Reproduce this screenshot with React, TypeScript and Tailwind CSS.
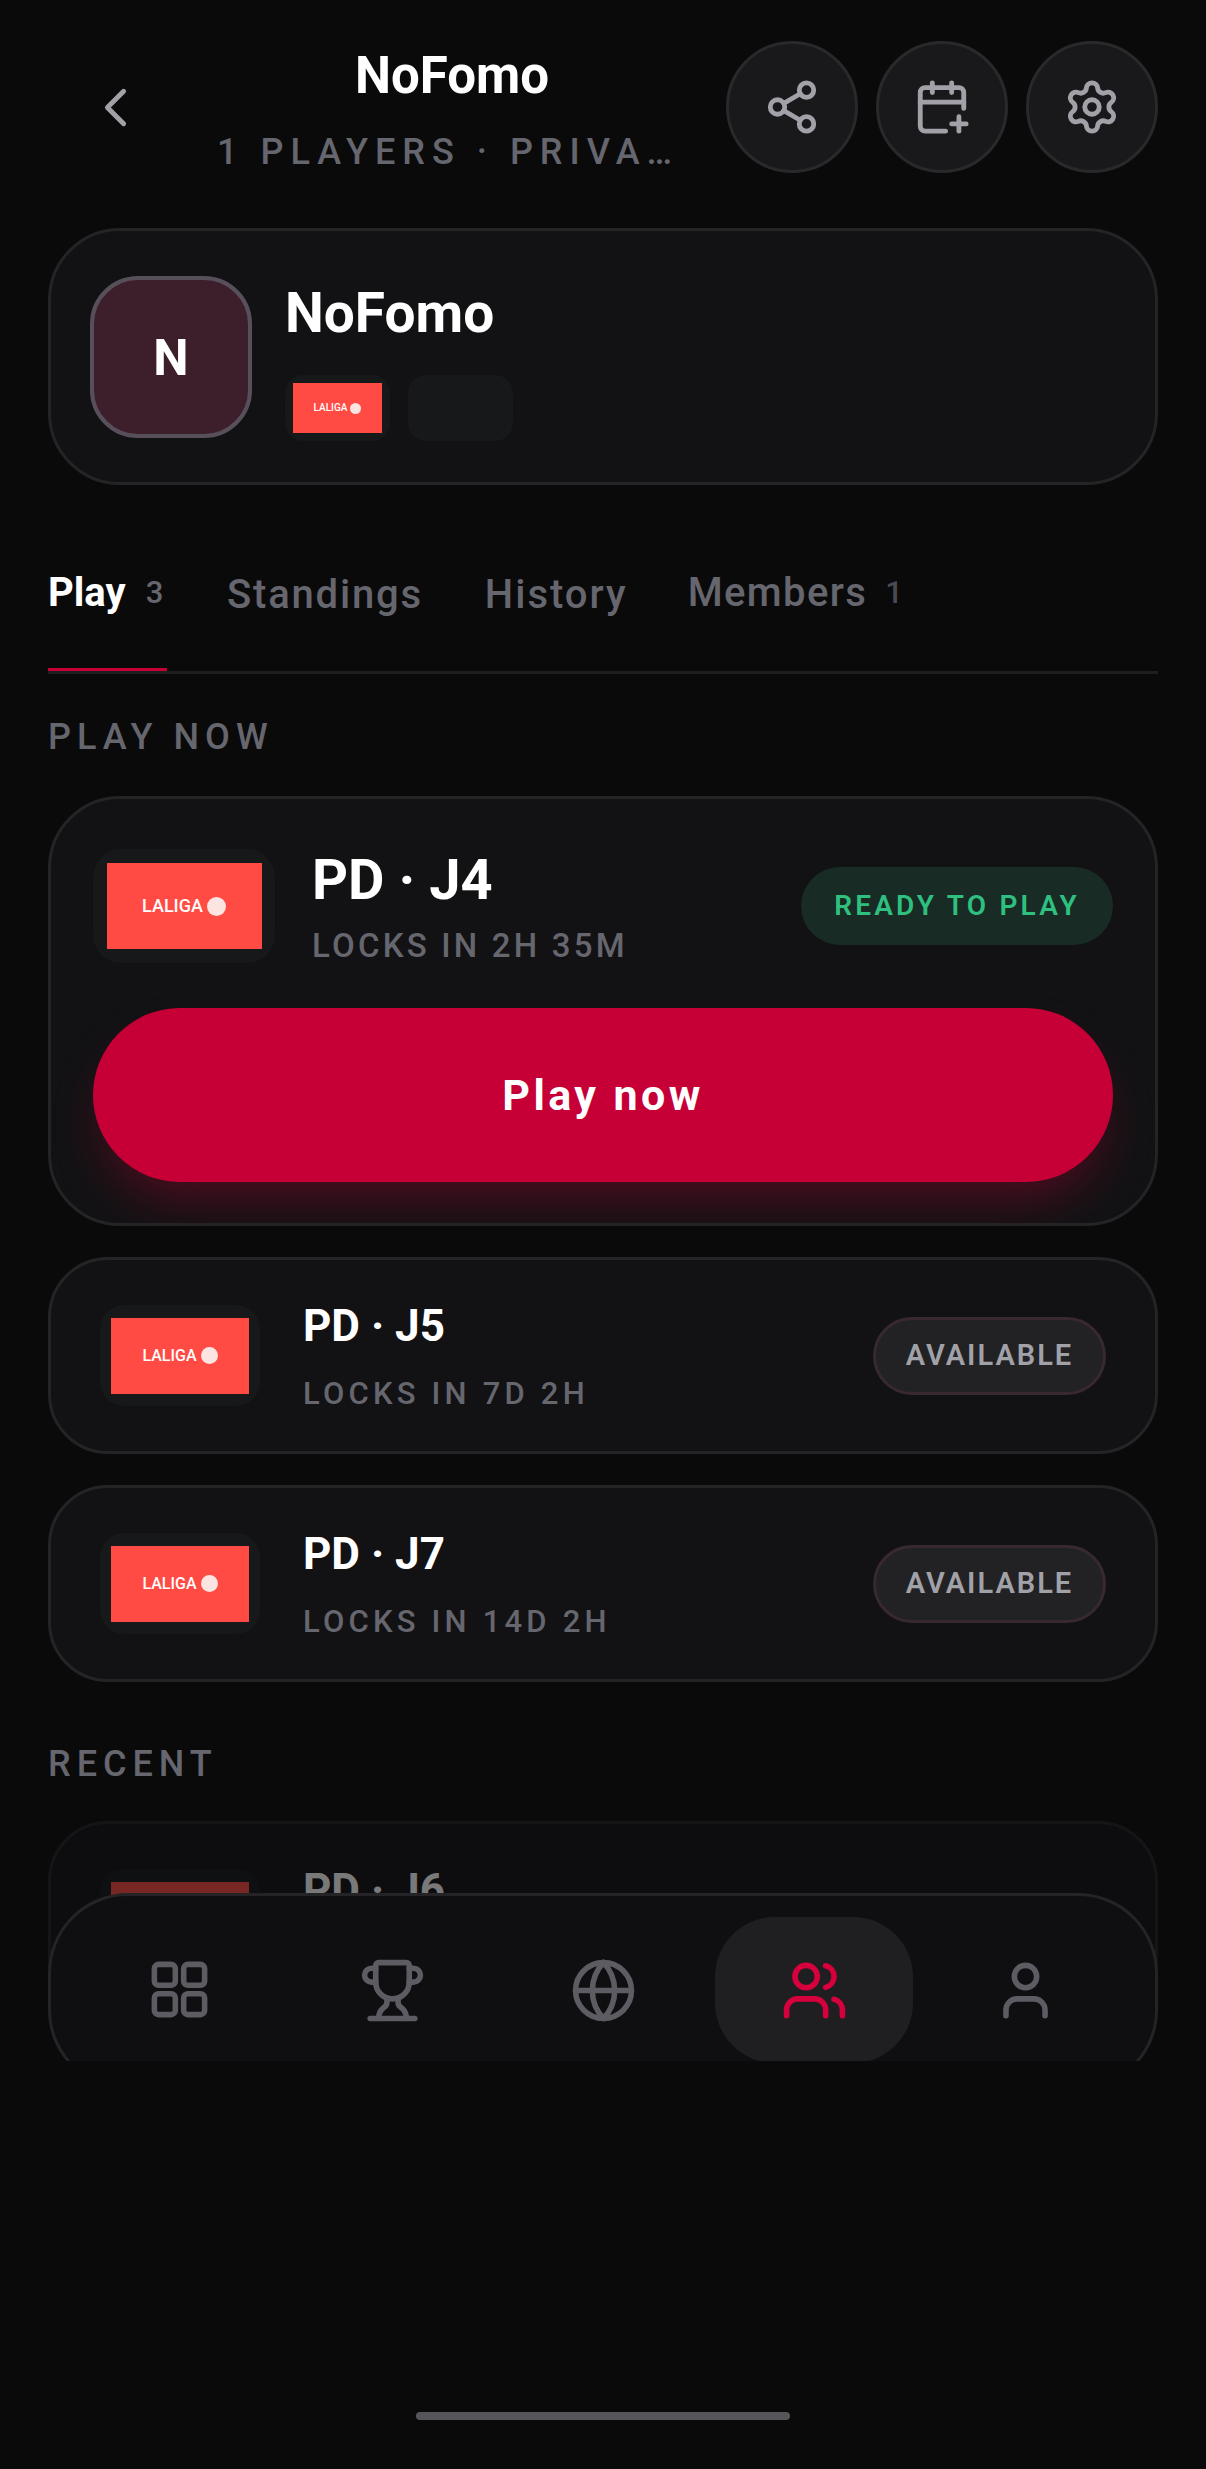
import { CalendarPlus, ChevronLeft, Globe, Settings, Share2, Trophy, User, Users } from "lucide-react";

function Laliga({ size }: { size: "lg" | "md" | "sm" }) {
  const box = size === "lg" ? "w-[155px] h-[86px] gap-[4px]" : size === "md" ? "w-[138px] h-[76px] gap-[4px]" : "w-[89px] h-[50px] gap-[3px]";
  const label = size === "lg" ? "text-[18px]" : size === "md" ? "text-[16px]" : "text-[10px]";
  const ball = size === "lg" ? "w-[19px] h-[19px]" : size === "md" ? "w-[17px] h-[17px]" : "w-[11px] h-[11px]";
  return (
    <div className={`flex items-center justify-center bg-[#ff4b44] ${box}`}>
      <span className={`font-medium leading-none text-white ${label}`}>LALIGA</span>
      <span className={`rounded-full bg-[#fbe4e2] ${ball}`}></span>
    </div>
  );
}

function SmallRow({ title, locks, available = true }: { title: string; locks: string; available?: boolean }) {
  return (
    <div className="flex h-[197px] items-center rounded-[60px] border-[3px] border-[#242427] bg-[#121214] pl-[49px] pr-[49px]">
      <div className="flex h-[101px] w-[160px] shrink-0 items-center justify-center rounded-[24px] bg-[#17181a]">
        <Laliga size="md" />
      </div>
      <div className="ml-[43px] flex-1">
        <div className="text-[44px] font-bold leading-[52px] text-white">{title}</div>
        <div className="mt-[24px] text-[31px] font-medium leading-[36px] tracking-[4.2px] text-[#66666e]">{locks}</div>
      </div>
      {available && (
        <div className="flex h-[78px] w-[233px] items-center justify-center rounded-full border-[3px] border-[#38292f] bg-[#222225] text-[29px] font-semibold tracking-[2px] text-[#a1a1a8]">
          AVAILABLE
        </div>
      )}
    </div>
  );
}

export default function App() {
  return (
    <div className="flex h-[2469px] w-[1206px] flex-col bg-[#0a0a0b] font-['Roboto',sans-serif]">
      <div className="relative h-[2061px] overflow-hidden">
        <div className="px-[48px] pt-[41px]">
          {/* top bar */}
          <div className="flex items-center">
            <div className="flex h-[132px] w-[130px] shrink-0 items-center justify-center">
              <ChevronLeft size={65} strokeWidth={1.8} className="ml-[4px] text-[#a1a1a8]" />
            </div>
            <div className="min-w-0 flex-1 pt-[6px] text-center">
              <div className="text-[51px] font-bold leading-[58px] text-white">NoFomo</div>
              <div className="ml-[39px] mt-[26px] whitespace-nowrap text-left text-[36px] font-medium leading-[42px] tracking-[7px] text-[#66666e]">
                1 PLAYERS · PRIVA…
              </div>
            </div>
            <div className="flex shrink-0 gap-[18px]">
              <button className="flex h-[132px] w-[132px] items-center justify-center rounded-full border-[3px] border-[#29292c] bg-[#19191c] text-[#a1a1a8]">
                <Share2 size={58} />
              </button>
              <button className="flex h-[132px] w-[132px] items-center justify-center rounded-full border-[3px] border-[#29292c] bg-[#19191c] text-[#a1a1a8]">
                <CalendarPlus size={58} />
              </button>
              <button className="flex h-[132px] w-[132px] items-center justify-center rounded-full border-[3px] border-[#29292c] bg-[#19191c] text-[#a1a1a8]">
                <Settings size={58} />
              </button>
            </div>
          </div>

          {/* league card */}
          <div className="mt-[55px] flex h-[257px] items-center rounded-[72px] border-[3px] border-[#242427] bg-[#121214] pl-[39px]">
            <div className="flex h-[162px] w-[162px] shrink-0 items-center justify-center rounded-[48px] border-[4px] border-[#57505a] bg-[#3d1f2b] pt-[4px] text-[50px] font-bold text-white">
              N
            </div>
            <div className="ml-[33px] pt-[10px]">
              <div className="text-[55px] font-bold leading-[62px] text-white">NoFomo</div>
              <div className="mt-[31px] flex gap-[18px]">
                <div className="flex h-[66px] w-[105px] items-center justify-center rounded-[18px] bg-[#17181a]">
                  <Laliga size="sm" />
                </div>
                <div className="h-[66px] w-[105px] rounded-[18px] bg-[#17181a]"></div>
              </div>
            </div>
          </div>

          {/* tabs */}
          <div className="mt-[62px] flex h-[127px] border-b-[3px] border-[#1e1e21]">
            <div className="flex h-[124px] w-[119px] items-start border-b-[3px] border-[#c60037] pt-[22px]">
              <span className="text-[40px] font-bold leading-[48px] text-white">Play</span>
              <span className="ml-[20px] text-[31px] font-medium leading-[48px] text-[#66666e]">3</span>
            </div>
            <div className="ml-[60px] pt-[24px] text-[40px] font-medium leading-[48px] tracking-[1.8px] text-[#66666e]">Standings</div>
            <div className="ml-[62px] pt-[24px] text-[40px] font-medium leading-[48px] tracking-[2px] text-[#66666e]">History</div>
            <div className="ml-[60px] flex items-start pt-[22px]">
              <span className="text-[40px] font-medium leading-[48px] tracking-[1.4px] text-[#66666e]">Members</span>
              <span className="ml-[18px] text-[31px] font-medium leading-[48px] text-[#4a4a50]">1</span>
            </div>
          </div>

          <div className="mt-[42px] text-[36px] font-medium leading-[42px] tracking-[6px] text-[#66666e]">PLAY NOW</div>

          {/* next up */}
          <div className="mt-[38px] overflow-hidden rounded-[72px] border-[3px] border-[#242427] bg-[#121214] px-[42px] pb-[41px] pt-[50px]">
            <div className="flex h-[114px] items-center">
              <div className="flex h-[114px] w-[182px] shrink-0 items-center justify-center rounded-[28px] bg-[#17181a]">
                <Laliga size="lg" />
              </div>
              <div className="ml-[37px] flex-1 self-start">
                <div className="-mt-[1px] text-[56px] font-bold leading-[64px] text-white">PD · J4</div>
                <div className="mt-[14px] text-[33px] font-medium leading-[40px] tracking-[3.2px] text-[#66666e]">LOCKS IN 2H 35M</div>
              </div>
              <div className="flex h-[78px] w-[312px] items-center justify-center rounded-full bg-[#182b24] text-[28px] font-semibold tracking-[3.2px] text-[#2fbf7f]">
                READY TO PLAY
              </div>
            </div>
            <button className="mt-[45px] flex h-[174px] w-full items-center justify-center rounded-full bg-[#c60037] text-[43px] font-bold tracking-[3.4px] text-white shadow-[0_28px_50px_-12px_rgba(198,0,55,0.35)]">
              Play now
            </button>
          </div>

          <div className="mt-[31px] flex flex-col gap-[31px]">
            <SmallRow title="PD · J5" locks="LOCKS IN 7D 2H" />
            <SmallRow title="PD · J7" locks="LOCKS IN 14D 2H" />
          </div>

          <div className="mt-[61px] text-[36px] font-medium leading-[42px] tracking-[6px] text-[#66666e]">RECENT</div>

          <div className="mt-[36px] opacity-45">
            <SmallRow title="PD · J6" locks="ENDED" available={false} />
          </div>
        </div>

        {/* bottom nav */}
        <div className="absolute left-[48px] top-[1893px] flex h-[197px] w-[1110px] items-start gap-[13px] rounded-[80px] border-[3px] border-[#242427] bg-[#0f0f11] px-[31px] pt-[21px]">
          <div className="flex h-[146px] w-[198px] items-center justify-center pb-[2px] text-[#5c5c62]">
            <svg width="67" height="67" viewBox="0 0 24 24" fill="none" stroke="currentColor" strokeWidth="2" className="-ml-[3px]">
              <rect x="3" y="3" width="7.5" height="7.5" rx="1.5" />
              <rect x="13.5" y="3" width="7.5" height="7.5" rx="1.5" />
              <rect x="3" y="13.5" width="7.5" height="7.5" rx="1.5" />
              <rect x="13.5" y="13.5" width="7.5" height="7.5" rx="1.5" />
            </svg>
          </div>
          <div className="flex h-[146px] w-[198px] items-center justify-center text-[#5c5c62]">
            <Trophy size={67} />
          </div>
          <div className="flex h-[146px] w-[198px] items-center justify-center text-[#5c5c62]">
            <Globe size={67} />
          </div>
          <div className="flex h-[146px] w-[198px] items-center justify-center rounded-[60px] bg-[#1f1f22] text-[#d6003c]">
            <Users size={67} />
          </div>
          <div className="flex h-[146px] w-[198px] items-center justify-center text-[#5c5c62]">
            <User size={67} />
          </div>
        </div>
      </div>

      <div className="flex flex-1 items-end justify-center pb-[49px]">
        <div className="h-[8px] w-[374px] rounded-full bg-[#55555a]"></div>
      </div>
    </div>
  );
}
